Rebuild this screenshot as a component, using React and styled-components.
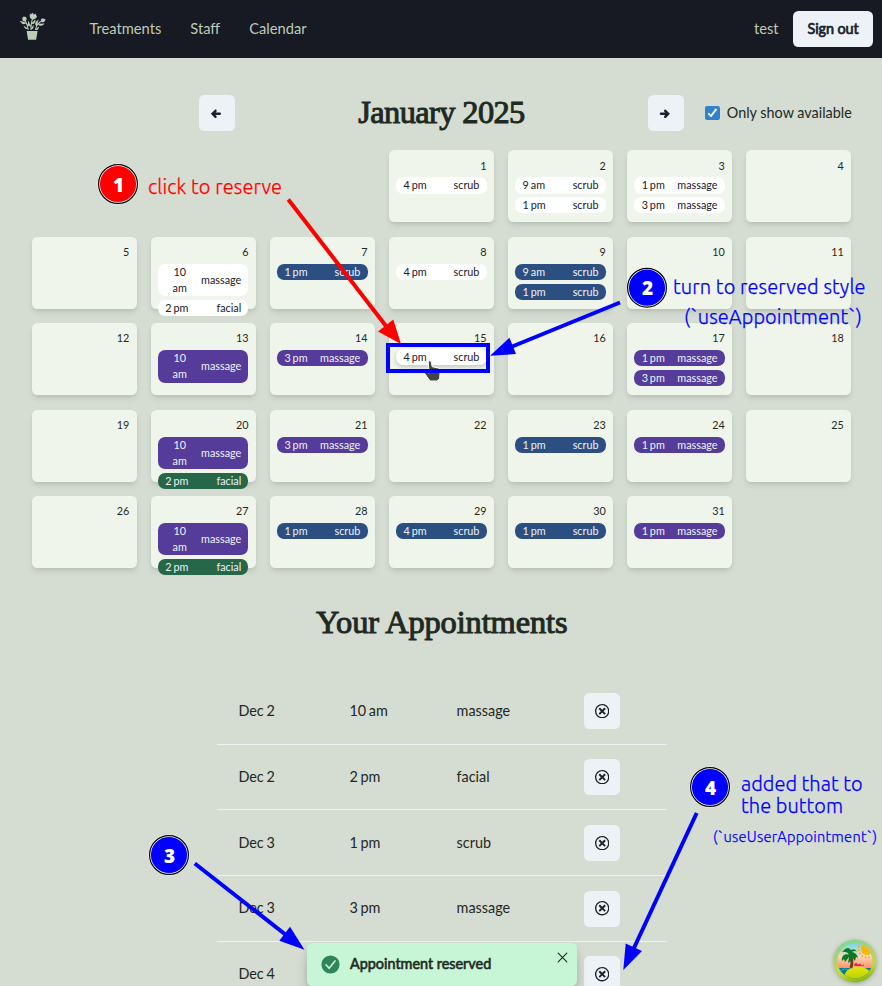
import React from "react";
import styled, { createGlobalStyle, css } from "styled-components";
import { GiFlowerPot } from "react-icons/gi";
import { TiArrowLeftThick, TiArrowRightThick } from "react-icons/ti";
import { ImCancelCircle } from "react-icons/im";

const GlobalStyle = createGlobalStyle`
  *, *::before, *::after { box-sizing: border-box; }
  html { font-size: 14.4px; }
  body {
    margin: 0;
    background: #d5dcd1;
    color: #1f2923;
    font-family: Lato, "Open Sans", sans-serif;
    line-height: 1.5;
  }
  h2, p { margin: 0; font-weight: 400; }
  button { font-family: inherit; border: 0; padding: 0; cursor: pointer; }
  svg { display: block; flex-shrink: 0; }
`;

const Page = styled.div`
  position: relative;
  width: 882px;
  height: 986px;
  overflow: hidden;
`;

const Navbar = styled.nav`
  height: 57.6px;
  display: flex;
  align-items: center;
  justify-content: space-between;
  padding: 0 9px 0 18px;
  background: #171923;
  color: #bdcbb9;
  font-size: 14.7px;

  span { margin-top: -1px; }
`;

const NavLinks = styled.div`
  display: flex;
  align-items: center;
  gap: 29px;

  svg { margin: -4px 13.6px 0 0; }
`;

const UserArea = styled.div`
  display: flex;
  align-items: center;
  gap: 14.4px;
`;

const Button = styled.button`
  display: inline-flex;
  align-items: center;
  justify-content: center;
  width: ${(p) => p.$width || "36px"};
  height: 36px;
  border-radius: 5.4px;
  background: #edf2f7;
  color: #1a202c;
  font-size: 14.4px;
  letter-spacing: -0.1px;
  -webkit-text-stroke: ${(p) => (p.$bold ? "0.7px currentColor" : "0")};
`;

const ArrowButton = styled(Button)`
  padding-right: 1px;
`;

const MonthBar = styled.div`
  display: flex;
  align-items: center;
  height: 36px;
  margin-top: 37.4px;
  padding-left: 199px;
`;

const Heading = styled.h2`
  font-family: "Liberation Serif", serif;
  font-size: 32.4px;
  line-height: 1.2;
  text-align: center;
  -webkit-text-stroke: 1px currentColor;
  letter-spacing: -0.1px;
`;

const MonthTitle = styled(Heading)`
  width: 413px;
  margin-top: -2px;
  letter-spacing: -0.6px;
`;

const Filter = styled.label`
  display: flex;
  align-items: center;
  gap: 7.2px;
  margin-left: 21px;
  font-size: 14.4px;
  white-space: nowrap;

  > span:last-child { margin-top: -1px; }
`;

const CheckBox = styled.span`
  display: grid;
  place-items: center;
  width: 14.6px;
  height: 14.4px;
  border-radius: 2px;
  background: #3182ce;
`;

const Calendar = styled.div`
  display: grid;
  grid-template-columns: repeat(7, 1fr);
  grid-auto-rows: 72px;
  gap: 14.4px;
  width: 819.2px;
  margin: 19.4px 0 0 31.85px;
`;

const Day = styled.div`
  display: flex;
  flex-direction: column;
  gap: 3.6px;
  padding: 7.2px;
  border-radius: 5.4px;
  background: #eff5ea;
  box-shadow: 0 4px 6px -1px rgba(0, 0, 0, 0.1), 0 2px 4px -1px rgba(0, 0, 0, 0.06);
  font-size: 10.8px;
  ${(p) => p.$first && css`grid-column-start: 4;`}
`;

const DayNumber = styled.p`
  text-align: right;
  line-height: 16.2px;
`;

const pillColors = {
  free: ["#ffffff", "#1a202c"],
  scrub: ["#2a4f80", "#edf2f7"],
  massage: ["#553c9a", "#edf2f7"],
  facial: ["#276749", "#edf2f7"],
};

const Pill = styled.div`
  display: flex;
  align-items: center;
  justify-content: space-between;
  flex-shrink: 0;
  padding: 0 7.2px;
  border-radius: 7.2px;
  line-height: 16.2px;
  text-align: center;
  word-spacing: -0.8px;
  background: ${(p) => pillColors[p.$tone][0]};
  color: ${(p) => pillColors[p.$tone][1]};
  ${(p) =>
    p.$hovered &&
    css`
      transform: translateY(-1px);
      box-shadow: 0 2px 4px rgba(0, 0, 0, 0.18);
    `}
`;

const PillTime = styled.span`
  white-space: nowrap;
  ${(p) =>
    p.$stacked &&
    css`
      width: 28.8px;
      white-space: normal;
      padding: 0 4px;
    `}
`;

const AppointmentsTitle = styled(Heading)`
  margin-top: 34.8px;
  padding-left: 1.5px;
`;

const AppointmentList = styled.div`
  width: 450px;
  margin: 37.2px 0 0 217px;
`;

const AppointmentRow = styled.div`
  display: grid;
  grid-template-columns: 111px 107.2px 127.2px 104.6px;
  align-items: center;
  height: 65.8px;
  border-bottom: 1px solid #edf2f7;
  font-size: 14.4px;
  line-height: 20px;
  word-spacing: -1px;
`;

const Cell = styled.div`
  padding-left: 21.4px;
`;

const TextCell = styled(Cell)`
  padding-bottom: 0.2px;
`;

const Toast = styled.div`
  position: absolute;
  left: 307px;
  top: 943px;
  width: 270px;
  height: 43px;
  display: flex;
  align-items: center;
  padding: 0 9px 0 13.5px;
  border-radius: 5.4px;
  background: #c6f6d5;
  box-shadow: 0 10px 15px -3px rgba(0, 0, 0, 0.22), 0 4px 8px -2px rgba(0, 0, 0, 0.15);
  font-size: 14.4px;
`;

const ToastText = styled.p`
  flex: 1;
  margin: -1px 0 0 10.5px;
  -webkit-text-stroke: 0.6px currentColor;
`;

const ToastClose = styled.span`
  align-self: flex-start;
  margin-top: 9px;
`;

const DevtoolsBadge = styled.div`
  position: absolute;
  left: 833px;
  top: 939px;
  border-radius: 50%;
  filter: drop-shadow(0 1px 2px rgba(0, 0, 0, 0.25));
`;

const AnnotationLayer = styled.svg`
  position: absolute;
  inset: 0;
  pointer-events: none;
`;

const Note = styled.text`
  font-family: Ubuntu, "Noto Sans", "Open Sans", sans-serif;
  font-weight: 300;
  font-size: ${(p) => p.$size || 20}px;
  fill: ${(p) => p.$color};
  stroke: ${(p) => p.$color};
  stroke-width: 0.25px;
`;

const BadgeNumber = styled.text`
  font-family: "Open Sans", sans-serif;
  font-weight: 800;
  font-size: 19px;
  fill: #fff;
  text-anchor: middle;
`;

const A = (time, treatment, reserved) => ({ time, treatment, reserved });

const schedule = {
  1: [A("4 pm", "scrub")],
  2: [A("9 am", "scrub"), A("1 pm", "scrub")],
  3: [A("1 pm", "massage"), A("3 pm", "massage")],
  6: [A("10 am", "massage"), A("2 pm", "facial")],
  7: [A("1 pm", "scrub", true)],
  8: [A("4 pm", "scrub")],
  9: [A("9 am", "scrub", true), A("1 pm", "scrub", true)],
  13: [A("10 am", "massage", true)],
  14: [A("3 pm", "massage", true)],
  15: [A("4 pm", "scrub")],
  17: [A("1 pm", "massage", true), A("3 pm", "massage", true)],
  20: [A("10 am", "massage", true), A("2 pm", "facial", true)],
  21: [A("3 pm", "massage", true)],
  23: [A("1 pm", "scrub", true)],
  24: [A("1 pm", "massage", true)],
  27: [A("10 am", "massage", true), A("2 pm", "facial", true)],
  28: [A("1 pm", "scrub", true)],
  29: [A("4 pm", "scrub", true)],
  30: [A("1 pm", "scrub", true)],
  31: [A("1 pm", "massage", true)],
};

const userAppointments = [
  ["Dec 2", "10 am", "massage"],
  ["Dec 2", "2 pm", "facial"],
  ["Dec 3", "1 pm", "scrub"],
  ["Dec 3", "3 pm", "massage"],
  ["Dec 4", "", ""],
];

function DayCell({ day }) {
  return (
    <Day $first={day === 1}>
      <DayNumber>{day}</DayNumber>
      {(schedule[day] || []).map((a) => (
        <Pill key={a.time} $tone={a.reserved ? a.treatment : "free"} $hovered={day === 15}>
          <PillTime $stacked={a.time === "10 am"}>{a.time}</PillTime>
          <span>{a.treatment}</span>
        </Pill>
      ))}
    </Day>
  );
}

function NumberBadge({ x, y, n, color }) {
  return (
    <g>
      <circle cx={x} cy={y} r="20.5" fill="#fff" fillOpacity="0.75" />
      <circle cx={x} cy={y} r="19.4" fill="#fff" stroke="#000" strokeWidth="1.2" />
      <circle cx={x} cy={y} r="18.1" fill={color} />
      <BadgeNumber x={x + 0.5} y={y + 7.5}>{n}</BadgeNumber>
    </g>
  );
}

function Arrow({ from, to, head, color }) {
  return (
    <g>
      <line x1={from[0]} y1={from[1]} x2={to[0]} y2={to[1]} stroke={color} strokeWidth="4" />
      <polygon points={head} fill={color} />
    </g>
  );
}

function Annotations() {
  return (
    <AnnotationLayer width="882" height="986" viewBox="0 0 882 986">
      <path
        d="M428.2 361.5q1.8-1.6 3 0l1 5.2 6 1.3q2.2 1 2 3.2l-.6 7.4-2.4 2.4h-7.2l-5.3-7.4q-.6-2 1.2-2l3.2 1.3Z"
        fill="#454545"
        stroke="#fff"
        strokeWidth="1"
      />
      <rect x="388" y="345" width="100" height="26" fill="none" stroke="#0000ff" strokeWidth="4" />
      <Arrow color="#ff0000" from={[288.3, 199.5]} to={[386, 326]} head="401,344 393.3,319.5 378,331.5" />
      <Arrow color="#0000ff" from={[620, 302.5]} to={[511, 347]} head="490,355.7 509.5,337.8 516,354" />
      <Arrow color="#0000ff" from={[194.8, 863.5]} to={[286, 935]} head="304.5,949.7 290,926.7 279.3,940.7" />
      <Arrow color="#0000ff" from={[696.7, 813]} to={[633.5, 949]} head="623.3,970 625.7,943.5 642,951" />
      <NumberBadge x={118} y={184} n="1" color="#ff0000" />
      <NumberBadge x={647} y={287.7} n="2" color="#0000ff" />
      <NumberBadge x={169} y={855} n="3" color="#0000ff" />
      <NumberBadge x={710} y={787} n="4" color="#0000ff" />
      <Note $color="#ff0000" x="148" y="193.6" textLength="134">click to reserve</Note>
      <Note $color="#0000ff" x="673" y="294" textLength="192.5">turn to reserved style</Note>
      <Note $color="#0000ff" x="684" y="323.5" textLength="178">(`useAppointment`)</Note>
      <Note $color="#0000ff" x="741" y="791" textLength="121.5">added that to</Note>
      <Note $color="#0000ff" x="741" y="812.5" textLength="102">the buttom</Note>
      <Note $color="#0000ff" $size={14.6} x="713" y="842" textLength="164">(`useUserAppointment`)</Note>
    </AnnotationLayer>
  );
}

function PalmIcon() {
  return (
    <svg width="44" height="44" viewBox="0 0 44 44">
      <defs>
        <linearGradient id="ring" x1="0.3" y1="0" x2="0.6" y2="1">
          <stop offset="0" stopColor="#79dc96" />
          <stop offset="0.35" stopColor="#b1ce73" />
          <stop offset="0.7" stopColor="#c5d83d" />
          <stop offset="1" stopColor="#81b80d" />
        </linearGradient>
        <linearGradient id="sky" x1="0" y1="0" x2="0" y2="1">
          <stop offset="0.1" stopColor="#73d9ec" />
          <stop offset="0.4" stopColor="#f8d9b0" />
          <stop offset="0.7" stopColor="#ff8465" />
        </linearGradient>
        <linearGradient id="sand" x1="0" y1="0" x2="0" y2="1">
          <stop offset="0" stopColor="#e7e60b" />
          <stop offset="1" stopColor="#91bd00" />
        </linearGradient>
        <clipPath id="scene"><circle cx="22" cy="22" r="17.5" /></clipPath>
      </defs>
      <circle cx="22" cy="22" r="21.5" fill="url(#ring)" />
      <g clipPath="url(#scene)">
        <rect width="44" height="44" fill="url(#sky)" />
        <circle cx="34" cy="10" r="8.5" fill="none" stroke="#ff9d19" strokeWidth="1.5" strokeDasharray="1.5 2" />
        <circle cx="34" cy="10" r="6" fill="#ffb500" />
        <rect y="29" width="44" height="12" fill="#087b8b" />
        <path d="M3 31q3 2 6 0t6 0m15 0q3 2 6 0t6 0" stroke="#14b6b8" fill="none" />
        <ellipse cx="25" cy="39" rx="14" ry="11.5" fill="url(#sand)" />
        <path d="M21 25.5l2-2 2 2 2-1 2 2 2-1v1.5h-10Z" fill="#e52d54" />
        <path d="M16.5 14q4 7 1.5 15" stroke="#693b16" strokeWidth="2.8" fill="none" />
        <path
          d="M17 16C12 14 8 17 9 22l2-2 1 3 4-5-1 6q5-3 3-7l4 5 1-4 2 1q-1-5-6-6 3-2 5 0-2-4-6-2-3-4-7 0l-2 2q4-1 7 2Z"
          fill="#087a27"
        />
      </g>
    </svg>
  );
}

export default function App() {
  return (
    <Page>
      <GlobalStyle />
      <Navbar>
        <NavLinks>
          <GiFlowerPot size={28.8} />
          <span>Treatments</span>
          <span>Staff</span>
          <span>Calendar</span>
        </NavLinks>
        <UserArea>
          <span>test</span>
          <Button $width="80px" $bold>Sign out</Button>
        </UserArea>
      </Navbar>

      <MonthBar>
        <ArrowButton aria-label="previous month"><TiArrowLeftThick size={14.4} /></ArrowButton>
        <MonthTitle>January 2025</MonthTitle>
        <ArrowButton aria-label="next month"><TiArrowRightThick size={14.4} /></ArrowButton>
        <Filter>
          <CheckBox>
            <svg width="10.8" height="9" viewBox="0 0 12 10" fill="none" stroke="#fff" strokeWidth="2">
              <polyline points="1.5 6 4.5 9 10.5 1" />
            </svg>
          </CheckBox>
          <span>Only show available</span>
        </Filter>
      </MonthBar>

      <Calendar>
        {Array.from({ length: 31 }, (_, i) => <DayCell key={i} day={i + 1} />)}
      </Calendar>

      <AppointmentsTitle>Your Appointments</AppointmentsTitle>
      <AppointmentList>
        {userAppointments.map(([date, time, treatment], i) => (
          <AppointmentRow key={i}>
            <TextCell>{date}</TextCell>
            <TextCell>{time}</TextCell>
            <TextCell>{treatment}</TextCell>
            <Cell>
              <Button aria-label="cancel appointment"><ImCancelCircle size={14.4} /></Button>
            </Cell>
          </AppointmentRow>
        ))}
      </AppointmentList>

      <Toast>
        <svg width="19" height="19" viewBox="0 0 24 24">
          <circle cx="12" cy="12" r="11.5" fill="#2f855a" />
          <path d="M6.2 12.3l4.1 4.5 7.4-9.3" fill="none" stroke="#c6f6d5" strokeWidth="2" strokeLinecap="round" />
        </svg>
        <ToastText>Appointment reserved</ToastText>
        <ToastClose>
          <svg width="11" height="11" viewBox="0 0 11 11" stroke="#252f28" strokeWidth="1.2" strokeLinecap="round">
            <path d="M1.2 1.2l8.6 8.6M9.8 1.2L1.2 9.8" />
          </svg>
        </ToastClose>
      </Toast>
      <DevtoolsBadge><PalmIcon /></DevtoolsBadge>
      <Annotations />
    </Page>
  );
}
